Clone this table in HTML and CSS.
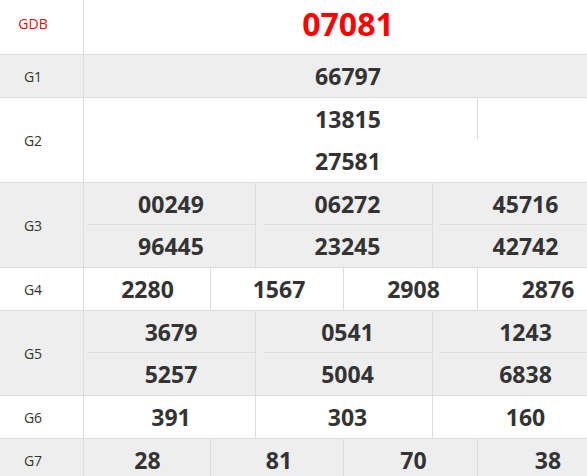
FILE: index.html
```html
<!DOCTYPE html>
<html lang="vi">
<head>
<meta charset="utf-8">
<title>Kết quả xổ số</title>
<link rel="stylesheet" href="styles.css">
</head>
<body>
<div class="board">
  <div class="row white gdb">
    <div class="lbl red">GDB</div>
    <div class="cells"><div class="cell full jackpot">07081</div></div>
  </div>
  <div class="row grey">
    <div class="lbl">G1</div>
    <div class="cells"><div class="cell full">66797</div></div>
  </div>
  <div class="row white">
    <div class="lbl">G2</div>
    <div class="cells">
      <div class="cell full stack plain">
        <div class="sub top split">13815</div>
        <div class="sub bottom">27581</div>
      </div>
    </div>
  </div>
  <div class="row grey">
    <div class="lbl">G3</div>
    <div class="cells three">
      <div class="cell stack"><div class="sub top">00249</div><div class="sub bottom">96445</div></div>
      <div class="cell stack"><div class="sub top">06272</div><div class="sub bottom">23245</div></div>
      <div class="cell stack"><div class="sub top">45716</div><div class="sub bottom">42742</div></div>
    </div>
  </div>
  <div class="row white">
    <div class="lbl">G4</div>
    <div class="cells four">
      <div class="cell">2280</div>
      <div class="cell">1567</div>
      <div class="cell">2908</div>
      <div class="cell">2876</div>
    </div>
  </div>
  <div class="row grey">
    <div class="lbl">G5</div>
    <div class="cells three">
      <div class="cell stack"><div class="sub top">3679</div><div class="sub bottom">5257</div></div>
      <div class="cell stack"><div class="sub top">0541</div><div class="sub bottom">5004</div></div>
      <div class="cell stack"><div class="sub top">1243</div><div class="sub bottom">6838</div></div>
    </div>
  </div>
  <div class="row white">
    <div class="lbl">G6</div>
    <div class="cells three">
      <div class="cell">391</div>
      <div class="cell">303</div>
      <div class="cell">160</div>
    </div>
  </div>
  <div class="row grey">
    <div class="lbl">G7</div>
    <div class="cells four">
      <div class="cell">28</div>
      <div class="cell">81</div>
      <div class="cell">70</div>
      <div class="cell">38</div>
    </div>
  </div>
</div>
</body>
</html>
```
FILE: styles.css
```css
html, body {
  margin: 0;
  padding: 0;
  overflow: hidden;
  background: #fff;
}

body {
  font-family: "Open Sans", "Liberation Sans", sans-serif;
  color: #333;
}

.board {
  width: 612px;
}

.row {
  display: flex;
  border-bottom: 1px solid #ddd;
}

.white { background: #fff; }
.grey { background: #eee; }

.lbl {
  box-sizing: border-box;
  width: 84px;
  flex: none;
  border-right: 1px solid #ddd;
  padding-right: 17px;
  display: flex;
  align-items: center;
  justify-content: center;
  font-size: 14px;
  color: #333;
}

.lbl.red { color: #e01010; }

.gdb .lbl {
  align-items: flex-start;
  line-height: 48px;
}

.cells {
  display: flex;
  width: 528px;
  flex: none;
}

.cell {
  box-sizing: border-box;
  text-align: center;
  font-weight: 700;
  font-size: 23px;
  line-height: 42px;
  height: 42px;
  color: #333;
}

.cell.full { width: 528px; }

.cell.jackpot {
  height: 54px;
  font-size: 32px;
  line-height: 48px;
  color: #f00;
}

.three .cell:nth-child(1) { width: 171px; padding-left: 3px; }
.three .cell:nth-child(2) { width: 177px; border-left: 1px solid #ddd; padding-left: 7px; }
.three .cell:nth-child(3) { width: 180px; border-left: 1px solid #ddd; padding-left: 6px; }

.four .cell:nth-child(1) { width: 126px; padding-left: 1px; }
.four .cell:nth-child(2) { width: 133px; border-left: 1px solid #ddd; padding-left: 4px; }
.four .cell:nth-child(3) { width: 134px; border-left: 1px solid #ddd; padding-left: 6px; }
.four .cell:nth-child(4) { width: 135px; border-left: 1px solid #ddd; padding-left: 6px; }

.cell.stack {
  height: 84px;
  display: flex;
  flex-direction: column;
}

.sub.top {
  height: 41px;
  line-height: 43px;
}

.sub.bottom {
  height: 43px;
  border-top: 1px solid #ddd;
  line-height: 42px;
}

.plain .sub.top {
  height: 42px;
  line-height: 42px;
}

.plain .sub.bottom {
  height: 42px;
  border-top: none;
}

.split {
  position: relative;
}

.split::after {
  content: "";
  position: absolute;
  left: 393px;
  top: 0;
  width: 1px;
  height: 42px;
  background: #ddd;
}
```
